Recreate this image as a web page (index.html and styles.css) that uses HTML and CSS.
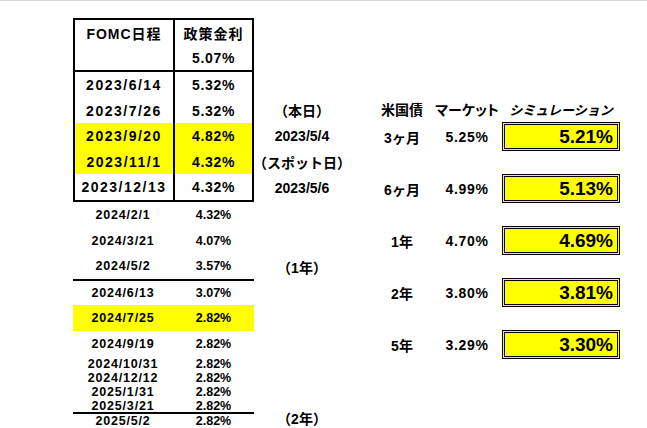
FILE: index.html
```html
<!DOCTYPE html>
<html lang="ja">
<head>
<meta charset="utf-8">
<title>FOMC</title>
<link rel="stylesheet" href="styles.css">
</head>
<body>
<main class="sheet">
  <section class="schedule">
    <div class="fomc">
      <div class="fomc-head">
        <div class="row h25"><span class="cell c1 head">FOMC日程</span><span class="cell c2 head">政策金利</span></div>
        <div class="row h25"><span class="cell c1"></span><span class="cell c2">5.07%</span></div>
      </div>
      <div class="row h26"><span class="cell c1">2023/6/14</span><span class="cell c2">5.32%</span></div>
      <div class="row h25"><span class="cell c1">2023/7/26</span><span class="cell c2">5.32%</span></div>
      <div class="row h26 hl"><span class="cell c1">2023/9/20</span><span class="cell c2">4.82%</span></div>
      <div class="row h25 hl"><span class="cell c1">2023/11/1</span><span class="cell c2">4.32%</span></div>
      <div class="row h26"><span class="cell c1">2023/12/13</span><span class="cell c2">4.32%</span></div>
    </div>
    <div class="list">
      <div class="row h26"><span class="cell c1">2024/2/1</span><span class="cell c2">4.32%</span></div>
      <div class="row h25"><span class="cell c1">2024/3/21</span><span class="cell c2">4.07%</span></div>
      <div class="row h26"><span class="cell c1">2024/5/2</span><span class="cell c2">3.57%</span></div>
      <div class="row h24 sep"><span class="cell c1">2024/6/13</span><span class="cell c2">3.07%</span></div>
      <div class="row h26 hl"><span class="cell c1">2024/7/25</span><span class="cell c2">2.82%</span></div>
      <div class="row h26"><span class="cell c1">2024/9/19</span><span class="cell c2">2.82%</span></div>
      <div class="row h14"><span class="cell c1">2024/10/31</span><span class="cell c2">2.82%</span></div>
      <div class="row h14"><span class="cell c1">2024/12/12</span><span class="cell c2">2.82%</span></div>
      <div class="row h14"><span class="cell c1">2025/1/31</span><span class="cell c2">2.82%</span></div>
      <div class="row h13"><span class="cell c1">2025/3/21</span><span class="cell c2">2.82%</span></div>
      <div class="row h14 sep"><span class="cell c1">2025/5/2</span><span class="cell c2">2.82%</span></div>
    </div>
  </section>

  <section class="labels">
    <div class="label">（本日）</div>
    <div class="label date">2023/5/4</div>
    <div class="label">（スポット日）</div>
    <div class="label date">2023/5/6</div>
    <div class="label gap-year1">（1年）</div>
    <div class="label gap-year2">（2年）</div>
  </section>

  <section class="rates">
    <div class="rate-head">
      <span class="tenor">米国債</span>
      <span class="market palt">マーケット</span>
      <span class="sim-title">シミュレーション</span>
    </div>
    <div class="rate-rows">
      <div class="rate-row"><span class="tenor">3ヶ月</span><span class="market num">5.25%</span><span class="sim">5.21%</span></div>
      <div class="rate-row"><span class="tenor">6ヶ月</span><span class="market num">4.99%</span><span class="sim">5.13%</span></div>
      <div class="rate-row"><span class="tenor">1年</span><span class="market num">4.70%</span><span class="sim">4.69%</span></div>
      <div class="rate-row"><span class="tenor">2年</span><span class="market num">3.80%</span><span class="sim">3.81%</span></div>
      <div class="rate-row"><span class="tenor">5年</span><span class="market num">3.29%</span><span class="sim">3.30%</span></div>
    </div>
  </section>
</main>
</body>
</html>
```

FILE: styles.css
```css
html, body {
  margin: 0;
  padding: 0;
  overflow: hidden;
}

body {
  background: #ffffff;
  border-top: 1px solid #d9d9d9;
  color: #000000;
  font-family: "Liberation Sans", "Noto Sans CJK JP", sans-serif;
  font-weight: bold;
  height: 427px;
}

.sheet {
  display: flex;
  align-items: flex-start;
  padding: 17px 0 0 73px;
}

/* ---------- left: FOMC schedule ---------- */
.schedule {
  width: 181px;
  flex: none;
}

.fomc {
  border: 2px solid #000;
  font-size: 14px;
}

.fomc .row {
  display: grid;
  grid-template-columns: 98px 79px;
}

.fomc .c2 {
  border-left: 2px solid #000;
}

.fomc-head {
  border-bottom: 2px solid #000;
}

.row {
  display: grid;
}

.cell {
  display: flex;
  align-items: center;
  justify-content: center;
  white-space: nowrap;
}

.fomc .c1 {
  letter-spacing: 1.5px;
}

.fomc .c2 {
  letter-spacing: 0.7px;
}

.fomc .head {
  letter-spacing: 1px;
}

.h26 { height: 26px; }
.h25 { height: 25px; }
.h24 { height: 24px; }
.h14 { height: 14px; }
.h13 { height: 13px; }

.hl {
  background: #ffff00;
}

.list {
  font-size: 12.5px;
}

.list .row {
  grid-template-columns: 100px 81px;
}

.list .c1 {
  letter-spacing: 0.8px;
}

.list .c2 {
  letter-spacing: 0px;
}

.sep {
  border-top: 2px solid #000;
}

/* ---------- middle: dates ---------- */
.labels {
  width: 96px;
  flex: none;
  padding-top: 79px;
  display: flex;
  flex-direction: column;
  font-size: 14px;
}

.label {
  height: 26px;
  display: flex;
  align-items: center;
  justify-content: center;
  white-space: nowrap;
}

.gap-year1 {
  margin-top: 53px;
}

.gap-year2 {
  margin-top: 131px;
  height: 16px;
  line-height: 16px;
}

/* ---------- right: rates ---------- */
.rates {
  margin-left: 22px;
  padding-top: 78px;
  flex: none;
  font-size: 14px;
}

.rate-head,
.rate-row {
  display: grid;
  grid-template-columns: 60px 70px 118px;
  align-items: center;
}

.rate-head {
  height: 26px;
}

.rate-rows {
  display: flex;
  flex-direction: column;
  gap: 23px;
}

.rate-row {
  height: 29px;
}

.tenor,
.market,
.sim-title {
  text-align: center;
  white-space: nowrap;
}

.palt {
  font-feature-settings: "palt" 1;
}

.num {
  letter-spacing: 0.7px;
}

.sim-title {
  font-style: italic;
  font-size: 13px;
}

.sim {
  height: 29px;
  box-sizing: border-box;
  border: 3px double #000;
  background: #ffff00;
  text-align: right;
  padding-right: 4px;
  font-size: 19px;
  font-weight: bold;
  line-height: 23px;
}
```
